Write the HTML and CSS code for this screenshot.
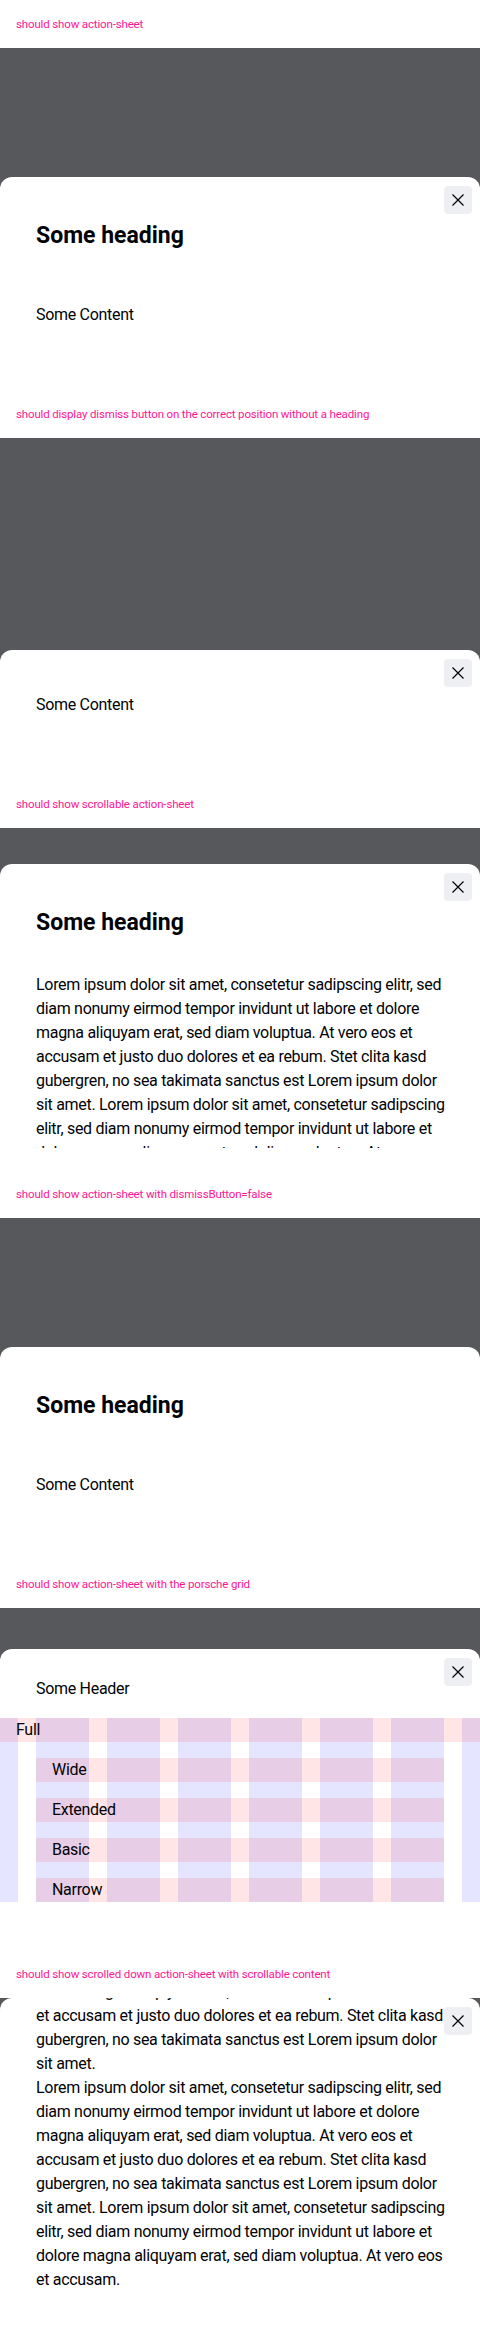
FILE: index.html
```html
<!DOCTYPE html>
<html lang="en">
<head>
<meta charset="utf-8">
<title>Action sheet</title>
<link rel="stylesheet" href="styles.css">
</head>
<body>

<section class="case">
  <p class="label">should show action-sheet</p>
  <div class="stage">
    <div class="sheet">
      <button class="dismiss" aria-label="Dismiss"><svg width="12" height="12" viewBox="0 0 12 12"><path d="M0.5 0.5 L11.5 11.5 M11.5 0.5 L0.5 11.5" /></svg></button>
      <h2 class="heading">Some heading</h2>
      <p class="text text-spaced">Some Content</p>
    </div>
  </div>
</section>

<section class="case">
  <p class="label">should display dismiss button on the correct position without a heading</p>
  <div class="stage">
    <div class="sheet">
      <button class="dismiss" aria-label="Dismiss"><svg width="12" height="12" viewBox="0 0 12 12"><path d="M0.5 0.5 L11.5 11.5 M11.5 0.5 L0.5 11.5" /></svg></button>
      <p class="text">Some Content</p>
    </div>
  </div>
</section>

<section class="case">
  <p class="label">should show scrollable action-sheet</p>
  <div class="stage">
    <div class="sheet sheet-scroll">
      <button class="dismiss" aria-label="Dismiss"><svg width="12" height="12" viewBox="0 0 12 12"><path d="M0.5 0.5 L11.5 11.5 M11.5 0.5 L0.5 11.5" /></svg></button>
      <div class="scroll">
        <div class="scroll-body">
          <h2 class="heading">Some heading</h2>
          <p class="text text-lines">Lorem ipsum dolor sit amet, consetetur sadipscing elitr, sed<br>diam nonumy eirmod tempor invidunt ut labore et dolore<br>magna aliquyam erat, sed diam voluptua. At vero eos et<br>accusam et justo duo dolores et ea rebum. Stet clita kasd<br>gubergren, no sea takimata sanctus est Lorem ipsum dolor<br>sit amet. Lorem ipsum dolor sit amet, consetetur sadipscing<br>elitr, sed diam nonumy eirmod tempor invidunt ut labore et<br>dolore magna aliquyam erat, sed diam voluptua. At vero eos<br>et accusam et justo duo dolores et ea rebum. Stet clita kasd<br>gubergren, no sea takimata sanctus est Lorem ipsum dolor<br>sit amet.<br>Lorem ipsum dolor sit amet, consetetur sadipscing elitr, sed<br>diam nonumy eirmod tempor invidunt ut labore et dolore<br>magna aliquyam erat, sed diam voluptua. At vero eos et<br>accusam et justo duo dolores et ea rebum. Stet clita kasd<br>gubergren, no sea takimata sanctus est Lorem ipsum dolor<br>sit amet. Lorem ipsum dolor sit amet, consetetur sadipscing<br>elitr, sed diam nonumy eirmod tempor invidunt ut labore et<br>dolore magna aliquyam erat, sed diam voluptua. At vero eos<br>et accusam.</p>
        </div>
      </div>
    </div>
  </div>
</section>

<section class="case">
  <p class="label">should show action-sheet with dismissButton=false</p>
  <div class="stage">
    <div class="sheet">
      <h2 class="heading">Some heading</h2>
      <p class="text text-spaced">Some Content</p>
    </div>
  </div>
</section>

<section class="case">
  <p class="label">should show action-sheet with the porsche grid</p>
  <div class="stage">
    <div class="sheet sheet-grid">
      <button class="dismiss" aria-label="Dismiss"><svg width="12" height="12" viewBox="0 0 12 12"><path d="M0.5 0.5 L11.5 11.5 M11.5 0.5 L0.5 11.5" /></svg></button>
      <p class="text grid-header">Some Header</p>
      <div class="grid">
        <div class="row">Full</div>
        <div class="row row-inset">Wide</div>
        <div class="row row-inset">Extended</div>
        <div class="row row-inset">Basic</div>
        <div class="row row-inset">Narrow</div>
      </div>
    </div>
  </div>
</section>

<section class="case">
  <p class="label">should show scrolled down action-sheet with scrollable content</p>
  <div class="stage">
    <div class="sheet sheet-scroll sheet-full">
      <button class="dismiss" aria-label="Dismiss"><svg width="12" height="12" viewBox="0 0 12 12"><path d="M0.5 0.5 L11.5 11.5 M11.5 0.5 L0.5 11.5" /></svg></button>
      <div class="scroll scroll-end">
        <div class="scroll-body">
          <h2 class="heading">Some heading</h2>
          <p class="text text-lines">Lorem ipsum dolor sit amet, consetetur sadipscing elitr, sed<br>diam nonumy eirmod tempor invidunt ut labore et dolore<br>magna aliquyam erat, sed diam voluptua. At vero eos et<br>accusam et justo duo dolores et ea rebum. Stet clita kasd<br>gubergren, no sea takimata sanctus est Lorem ipsum dolor<br>sit amet. Lorem ipsum dolor sit amet, consetetur sadipscing<br>elitr, sed diam nonumy eirmod tempor invidunt ut labore et<br>dolore magna aliquyam erat, sed diam voluptua. At vero eos<br>et accusam et justo duo dolores et ea rebum. Stet clita kasd<br>gubergren, no sea takimata sanctus est Lorem ipsum dolor<br>sit amet.<br>Lorem ipsum dolor sit amet, consetetur sadipscing elitr, sed<br>diam nonumy eirmod tempor invidunt ut labore et dolore<br>magna aliquyam erat, sed diam voluptua. At vero eos et<br>accusam et justo duo dolores et ea rebum. Stet clita kasd<br>gubergren, no sea takimata sanctus est Lorem ipsum dolor<br>sit amet. Lorem ipsum dolor sit amet, consetetur sadipscing<br>elitr, sed diam nonumy eirmod tempor invidunt ut labore et<br>dolore magna aliquyam erat, sed diam voluptua. At vero eos<br>et accusam.</p>
        </div>
      </div>
    </div>
  </div>
</section>

</body>
</html>
```

FILE: styles.css
```css
* {
  box-sizing: border-box;
}

body {
  margin: 0;
  background: #ffffff;
  color: #010205;
  font-family: Roboto, "Liberation Sans", Arial, sans-serif;
}

.label {
  margin: 0;
  height: 48px;
  padding-left: 16px;
  font-size: 11.5px;
  line-height: 48px;
  letter-spacing: -0.15px;
  white-space: nowrap;
  color: #ff1493;
}

.stage {
  height: 342px;
  background: #57585b;
  display: flex;
  flex-direction: column;
  justify-content: flex-end;
  overflow: hidden;
}

.sheet {
  position: relative;
  background: #ffffff;
  border-radius: 12px 12px 0 0;
  padding: 43px 36px 63px;
  display: flex;
  flex-direction: column;
}

.dismiss {
  position: absolute;
  top: 9px;
  right: 8px;
  z-index: 2;
  width: 28px;
  height: 28px;
  padding: 0;
  border: 0;
  border-radius: 4px;
  background: #eeeff2;
  display: flex;
  align-items: center;
  justify-content: center;
}

.dismiss path {
  fill: none;
  stroke: #010205;
  stroke-width: 1.2;
}

.heading {
  margin: 0 0 34px;
  font-size: 23px;
  line-height: 32px;
  font-weight: 700;
}

.text {
  margin: 0;
  font-size: 16px;
  line-height: 24px;
  letter-spacing: -0.3px;
}

.text-spaced {
  margin-top: 17px;
}

.text-lines {
  white-space: nowrap;
}

/* scrollable sheet */
.sheet-scroll {
  height: 306px;
  padding: 0 0 22px;
}

.sheet-full {
  height: 342px;
}

.scroll {
  flex: 1;
  min-height: 0;
  overflow: hidden;
  padding: 43px 36px 0;
}

.scroll-end {
  display: flex;
  flex-direction: column;
  justify-content: flex-end;
  padding: 0 36px 26px;
}

.scroll-body {
  flex-shrink: 0;
}

/* grid sheet */
.sheet-grid {
  padding: 28px 0 48px;
}

.grid-header {
  padding: 0 36px;
  margin-bottom: 17px;
}

.grid {
  display: flex;
  flex-direction: column;
  gap: 16px;
  background: linear-gradient(to right,
    rgba(0, 0, 255, 0.1) 0 18px,
    transparent 18px 36px,
    rgba(0, 0, 255, 0.1) 36px 89px,
    transparent 89px 107px,
    rgba(0, 0, 255, 0.1) 107px 160px,
    transparent 160px 178px,
    rgba(0, 0, 255, 0.1) 178px 231px,
    transparent 231px 249px,
    rgba(0, 0, 255, 0.1) 249px 302px,
    transparent 302px 320px,
    rgba(0, 0, 255, 0.1) 320px 373px,
    transparent 373px 391px,
    rgba(0, 0, 255, 0.1) 391px 444px,
    transparent 444px 462px,
    rgba(0, 0, 255, 0.1) 462px 480px);
}

.row {
  height: 24px;
  padding-left: 16px;
  font-size: 16px;
  line-height: 24px;
  letter-spacing: -0.3px;
  background: rgba(255, 0, 0, 0.1);
}

.row-inset {
  margin: 0 36px;
}
```
